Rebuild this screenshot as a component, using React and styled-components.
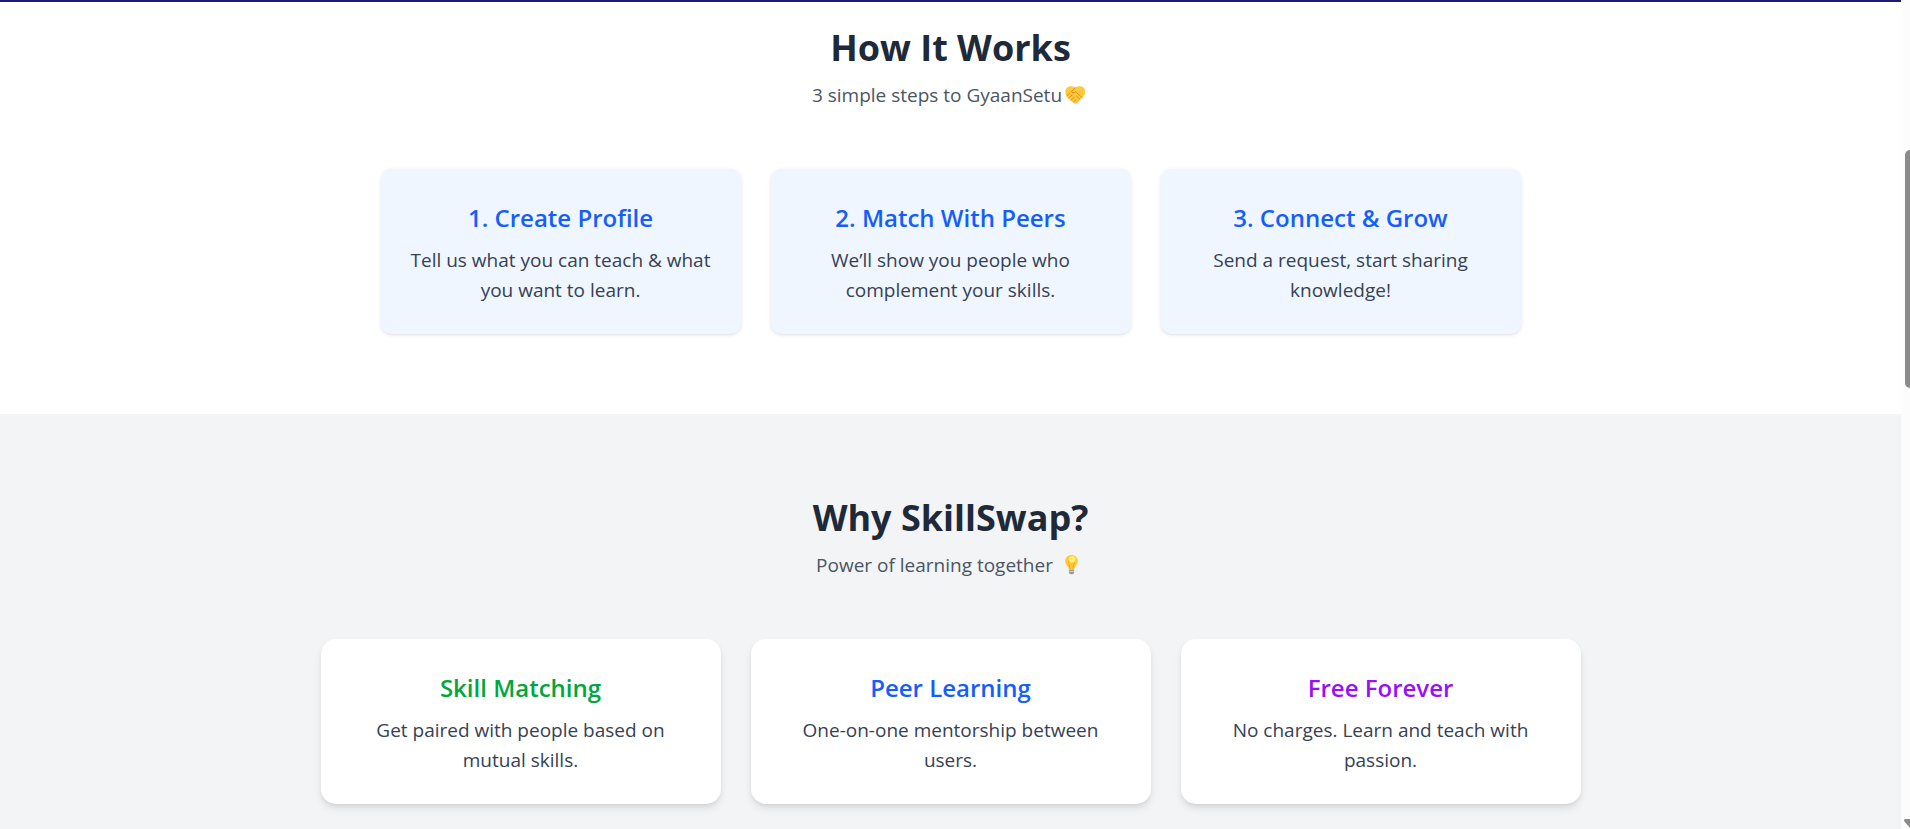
import React from "react";
import styled, { createGlobalStyle } from "styled-components";

const GlobalStyle = createGlobalStyle`
  *, *::before, *::after { box-sizing: border-box; }
  body {
    margin: 0;
    font-family: "Segoe UI", "Open Sans", "Noto Sans", sans-serif;
    background: #ffffff;
  }
  h2, h3, p { margin: 0; }
`;

const Page = styled.div`
  display: grid;
  grid-template-columns: minmax(0, 1fr) 9px;
  height: 100vh;
  overflow: hidden;
`;

const Content = styled.main`
  height: 100vh;
  overflow: hidden;
`;

const HeaderEdge = styled.header`
  position: relative;
  height: 2px;
  background: #1e1a78;
  box-shadow: 0 5px 8px -1px rgba(0, 0, 0, 0.1), 0 2px 5px -2px rgba(0, 0, 0, 0.1);
`;

const Section = styled.section`
  display: flex;
  flex-direction: column;
  align-items: center;
  padding: ${(p) => (p.$scrolled ? "23px" : "81px")} 30px 80px;
  background: ${(p) => p.$background};
  text-align: center;
`;

const Heading = styled.h2`
  margin-bottom: 10px;
  color: #1e2939;
  font-size: 36px;
  font-weight: 700;
  line-height: 45px;
`;

const Subtitle = styled.p`
  display: flex;
  align-items: center;
  gap: ${(p) => p.$gap};
  margin-bottom: 59px;
  color: #4a5565;
  font-size: 19px;
  line-height: 30px;
`;

const CardGrid = styled.div`
  display: grid;
  grid-template-columns: repeat(3, minmax(0, 1fr));
  gap: 30px;
  width: 100%;
  max-width: ${(p) => p.$maxWidth};
`;

const Card = styled.article`
  padding: 31px 30px 29px;
  border-radius: 10px;
  background: #eff6ff;
  box-shadow: 0 1px 4px rgba(0, 0, 0, 0.1), 0 1px 2px -1px rgba(0, 0, 0, 0.1);
`;

const RaisedCard = styled(Card)`
  border-radius: 15px;
  background: #ffffff;
  box-shadow: 0 5px 8px -1px rgba(0, 0, 0, 0.1), 0 2px 5px -2px rgba(0, 0, 0, 0.1);
`;

const CardTitle = styled.h3`
  margin-bottom: 10px;
  color: ${(p) => p.$color};
  font-size: 24px;
  font-weight: 600;
  line-height: 35px;
`;

const CardText = styled.p`
  color: #364153;
  font-size: 19px;
  line-height: 30px;
`;

const EmojiSvg = styled.svg`
  display: block;
  width: 27px;
  height: 24px;
`;

const ScrollTrack = styled.div`
  display: flex;
  flex-direction: column;
  align-items: flex-end;
  justify-content: space-between;
  height: 100vh;
  padding-top: 150px;
  background: #fcfcfc;
`;

const ScrollThumb = styled.div`
  width: 5px;
  height: 238px;
  border-radius: 5px 0 0 5px;
  background: #8b8b8b;
`;

const ScrollArrow = styled.svg`
  display: block;
  width: 6px;
  height: 10px;
`;

function Handshake() {
  return (
    <EmojiSvg viewBox="0 0 27 24" role="img" aria-label="Handshake">
      <path
        d="M3.300 8.500C3.300 6 5.200 3.400 7.500 3.400c2.200-.2 4 .3 5.700 1.200 2.200-1.100 4.300-1.500 6.500-1.100 2.200.4 3.600 3 3.500 5.400 0 2-.9 3.700-2.500 5.200l-5.300 5.800c-1.100 1.100-2.700 1.100-3.800 0L5 14.200c-1.200-1.500-1.700-3.600-1.700-5.700Z"
        fill="#ffc83d"
      />
      <path
        d="m13.200 5-3.800 3.600c.6 1.500 2.500 1.500 4.200.2l6.600 5.900M5.200 12.400l2.600-2.100M6.900 14.800l3.300-2.900M9.100 17l3.100-2.700M11.500 19l2.300-2.100M14.300 12.800l3.300 3"
        fill="none"
        stroke="#d98a10"
        strokeWidth="0.9"
        strokeLinecap="round"
      />
    </EmojiSvg>
  );
}

function LightBulb() {
  return (
    <EmojiSvg viewBox="0 0 27 24" role="img" aria-label="Light bulb">
      <path
        d="M13.500 1.900c3.600 0 6.300 2.600 6.300 6.100 0 3.600-3 4.600-3.600 8.800h-5.400C10.200 12.600 7.200 11.600 7.200 8c0-3.500 2.700-6.100 6.300-6.100Z"
        fill="#ffc83d"
      />
      <path
        d="m10.400 8.600 2 7.900m4.200-7.900-2 7.900"
        fill="none"
        stroke="#eda51d"
        strokeWidth="0.900"
      />
      <circle cx="14.300" cy="6.200" r="3.200" fill="#fff06b" />
      <path d="M10.900 16.800h5.200v3.100l-1.200 1.400h-2.800l-1.200-1.400Z" fill="#9b9b9b" />
      <path d="M10.900 18.300h5.200" stroke="#d3d3d3" strokeWidth="0.900" />
    </EmojiSvg>
  );
}

const steps = [
  { title: "1. Create Profile", text: "Tell us what you can teach & what you want to learn." },
  { title: "2. Match With Peers", text: "We’ll show you people who complement your skills." },
  { title: "3. Connect & Grow", text: "Send a request, start sharing knowledge!" },
];

const benefits = [
  { title: "Skill Matching", color: "#00a63e", text: "Get paired with people based on mutual skills." },
  { title: "Peer Learning", color: "#155dfc", text: "One-on-one mentorship between users." },
  { title: "Free Forever", color: "#9810fa", text: "No charges. Learn and teach with passion." },
];

export default function App() {
  return (
    <>
      <GlobalStyle />
      <Page>
        <Content>
          <HeaderEdge />
          <Section $scrolled $background="#ffffff">
            <Heading>How It Works</Heading>
            <Subtitle $gap="0">
              3 simple steps to GyaanSetu
              <Handshake />
            </Subtitle>
            <CardGrid $maxWidth="1140px">
              {steps.map((step) => (
                <Card key={step.title}>
                  <CardTitle $color="#155dfc">{step.title}</CardTitle>
                  <CardText>{step.text}</CardText>
                </Card>
              ))}
            </CardGrid>
          </Section>
          <Section $background="#f3f4f6">
            <Heading>Why SkillSwap?</Heading>
            <Subtitle $gap="5px">
              Power of learning together
              <LightBulb />
            </Subtitle>
            <CardGrid $maxWidth="1260px">
              {benefits.map((benefit) => (
                <RaisedCard key={benefit.title}>
                  <CardTitle $color={benefit.color}>{benefit.title}</CardTitle>
                  <CardText>{benefit.text}</CardText>
                </RaisedCard>
              ))}
            </CardGrid>
          </Section>
        </Content>
        <ScrollTrack aria-hidden="true">
          <ScrollThumb />
          <ScrollArrow viewBox="0 0 6 10">
            <path d="M1 0h5v9L0 2Q0 0 1 0Z" fill="#8b8b8b" />
          </ScrollArrow>
        </ScrollTrack>
      </Page>
    </>
  );
}
